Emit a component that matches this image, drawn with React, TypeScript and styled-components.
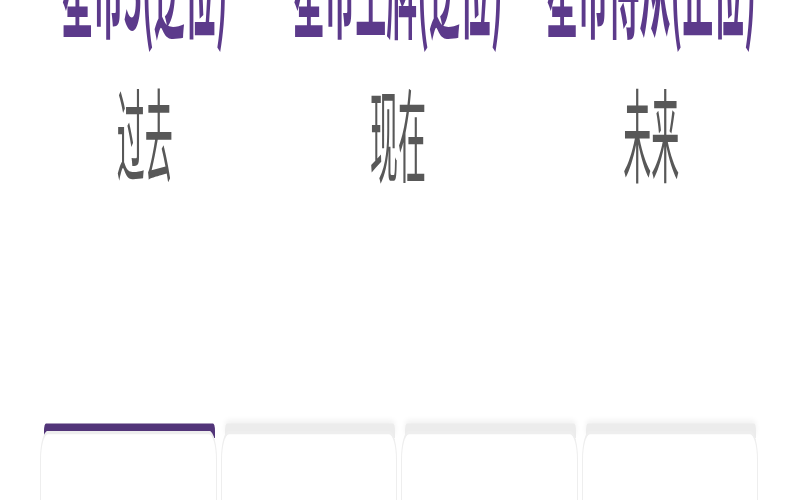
import React from 'react'
import { styled, createGlobalStyle } from 'styled-components'

const GlobalStyle = createGlobalStyle`
    html, body {
        margin: 0;
        padding: 0;
        background: #ffffff;
        overflow: hidden;
    }
    body {
        font-family: "Noto Sans CJK SC", "Noto Sans", sans-serif;
    }
`

interface ISpreadCard {
    name: string
    position: string
}

const cards: ISpreadCard[] = [
    { name: '星币5(逆位)', position: '过去' },
    { name: '星币王牌(逆位)', position: '现在' },
    { name: '星币侍从(正位)', position: '未来' },
]

const tabs = [0, 1, 2, 3]

const App: React.FC = () => {
    const [activeTab, setActiveTab] = React.useState<number>(0)

    return (
        <>
            <GlobalStyle />
            <Screen>
                <Stage>
                    <SpreadGrid>
                        {cards.map((card) => (
                            <SpreadColumn key={card.position}>
                                <CardName>{card.name}</CardName>
                                <PositionLabel>{card.position}</PositionLabel>
                            </SpreadColumn>
                        ))}
                    </SpreadGrid>
                    <TabRow>
                        {tabs.map((tab) => (
                            <Tab key={tab} onClick={() => setActiveTab(tab)}>
                                <TabBar $active={activeTab === tab} />
                                <TabBody />
                            </Tab>
                        ))}
                    </TabRow>
                </Stage>
            </Screen>
        </>
    )
}

export default App

const Screen = styled.div`
    width: 800px;
    height: 500px;
    overflow: hidden;
    background: #ffffff;
`

// the screenshot is a phone view stretched vertically, so lay out in phone units and stretch
const Stage = styled.div`
    width: 800px;
    height: 137px;
    transform: scaleY(3.65);
    transform-origin: top left;
    display: flex;
    flex-direction: column;
`

const SpreadGrid = styled.div`
    display: grid;
    grid-template-columns: repeat(3, 1fr);
    padding: 0 22px 0 18px;
    margin-top: -20.7px;
`

const SpreadColumn = styled.div`
    display: flex;
    flex-direction: column;
    align-items: center;
    gap: 11.3px;
`

const CardName = styled.p`
    margin: 0;
    font-size: 31px;
    line-height: 31px;
    font-weight: 700;
    color: #5c3a8b;
    white-space: nowrap;
`

const PositionLabel = styled.p`
    margin: 0;
    font-size: 28px;
    line-height: 28px;
    font-weight: 400;
    color: #585858;
`

const TabRow = styled.div`
    margin-top: auto;
    display: grid;
    grid-template-columns: repeat(4, 1fr);
    gap: 4px;
    padding: 0 42px 0 40px;
    height: 20.6px;
`

const Tab = styled.div`
    display: flex;
    flex-direction: column;
    cursor: pointer;
`

const TabBar = styled.div<{ $active: boolean }>`
    height: 3.6px;
    margin: 0 2px 0 4px;
    border-radius: 2px 2px 0 0;
    background: ${(p) => (p.$active ? '#523579' : '#ececec')};
    box-shadow: ${(p) => (p.$active ? 'none' : '0 -1px 3px rgba(0, 0, 0, 0.05)')};
`

const TabBody = styled.div`
    flex: 1;
    background: #ffffff;
    border: 1px solid #eeeeee;
    border-bottom: none;
    border-radius: 8px 8px 0 0;
    margin-top: -2px;
`
